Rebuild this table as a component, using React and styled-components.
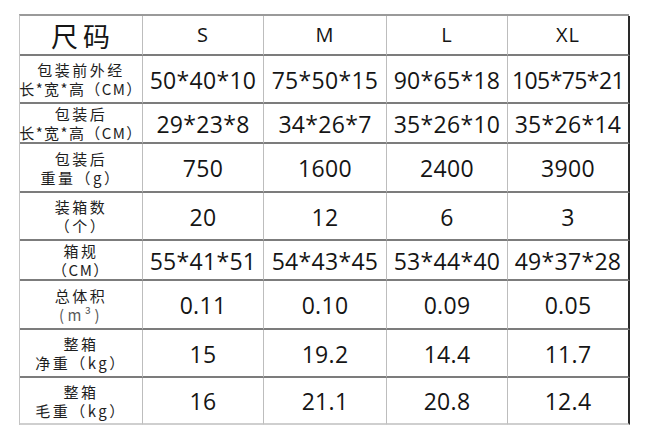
import React from "react";
import styled, { createGlobalStyle } from "styled-components";

const Global = createGlobalStyle`
  html, body { margin: 0; padding: 0; background: #fff; }
  body { width: 649px; height: 436px; overflow: hidden; }
`;

const Page = styled.div`
  padding: 14px 0 0 19px;
`;

const Table = styled.div`
  display: grid;
  grid-template-columns: 123px 121px 123px 121px 122px;
  grid-template-rows: 40px 48px 40px 49px 48px 40px 49px 48px 47px;
  width: 610px;
  box-sizing: border-box;
  border-top: 2px solid #9a9a9a;
  border-left: 1px solid #c4c4c4;
`;

const Cell = styled.div`
  display: flex;
  flex-direction: column;
  align-items: center;
  justify-content: center;
  box-sizing: border-box;
  border-bottom: 2px solid ${(p) => (p.$last ? "#cfcfcf" : "#7c7c7c")};
  border-right: ${(p) => (p.$edge ? "2px solid #2a2a2a" : "1px solid #bdbdbd")};
  color: #151515;
  font-family: "Open Sans", "Noto Sans CJK SC", sans-serif;
  white-space: nowrap;
`;

const Value = styled.span`
  font-size: 23px;
  letter-spacing: ${(p) => p.$ls}px;
  line-height: 1;
  padding-top: 2px;
`;

const SizeHead = styled.span`
  font-size: 20px;
  line-height: 1;
  letter-spacing: 1px;
`;

const TitleHead = styled.span`
  font-family: "Noto Sans CJK SC", sans-serif;
  font-size: 27px;
  letter-spacing: 5px;
  line-height: 1;
  padding-left: 4px;
`;

const Label = styled.span`
  font-family: "Noto Sans CJK SC", sans-serif;
  font-size: 15px;
  line-height: 19px;
  letter-spacing: ${(p) => p.$ls}px;
  color: ${(p) => (p.$muted ? "#5a5a5a" : "#1e1e1e")};
  text-align: center;
`;

const rows = [
  {
    label: [["包装前外经", 2.5], ["长*宽*高（CM）", 1.4]],
    values: ["50*40*10", "75*50*15", "90*65*18", "105*75*21"],
  },
  {
    label: [["包装后", 2.5], ["长*宽*高（CM）", 1.4]],
    values: ["29*23*8", "34*26*7", "35*26*10", "35*26*14"],
  },
  {
    label: [["包装后", 2.5], ["重量（g）", 2.5]],
    values: ["750", "1600", "2400", "3900"],
  },
  {
    label: [["装箱数", 2.5], ["（个）", 2.5]],
    values: ["20", "12", "6", "3"],
  },
  {
    label: [["箱规", 2.5], ["（CM）", 1.5]],
    values: ["55*41*51", "54*43*45", "53*44*40", "49*37*28"],
  },
  {
    label: [["总体积", 2.5], ["(m³)", 3.5, true]],
    values: ["0.11", "0.10", "0.09", "0.05"],
  },
  {
    label: [["整箱", 2.5], ["净重（kg）", 2.5]],
    values: ["15", "19.2", "14.4", "11.7"],
  },
  {
    label: [["整箱", 2.5], ["毛重（kg）", 2.5]],
    values: ["16", "21.1", "20.8", "12.4"],
  },
];

const sizes = ["S", "M", "L", "XL"];

function LabelCell({ lines, last }) {
  return (
    <Cell $last={last}>
      {lines.map(([text, ls, muted], i) => (
        <Label key={i} $ls={ls} $muted={muted}>
          {text}
        </Label>
      ))}
    </Cell>
  );
}

export default function App() {
  return (
    <Page>
      <Global />
      <Table>
        <Cell>
          <TitleHead>尺码</TitleHead>
        </Cell>
        {sizes.map((s, i) => (
          <Cell key={s} $edge={i === 3}>
            <SizeHead>{s}</SizeHead>
          </Cell>
        ))}
        {rows.map((r, ri) => {
          const last = ri === rows.length - 1;
          return (
            <React.Fragment key={ri}>
              <LabelCell lines={r.label} last={last} />
              {r.values.map((v, vi) => (
                <Cell key={vi} $edge={vi === 3} $last={last}>
                  <Value $ls={v.length >= 9 ? -0.6 : 0.3}>{v}</Value>
                </Cell>
              ))}
            </React.Fragment>
          );
        })}
      </Table>
    </Page>
  );
}
